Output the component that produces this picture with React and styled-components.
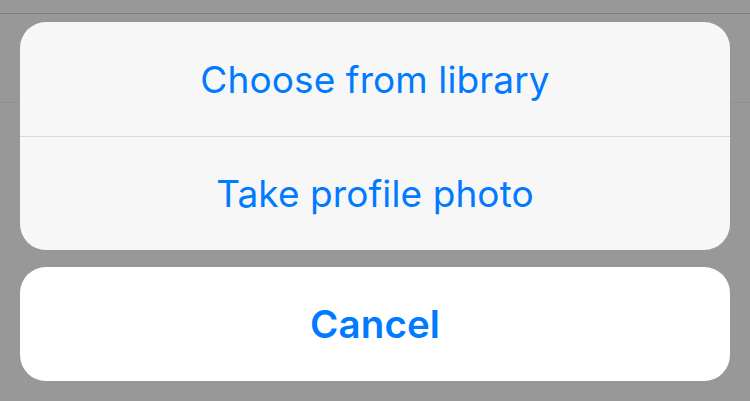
import React from "react";
import styled, { createGlobalStyle } from "styled-components";

const GlobalStyle = createGlobalStyle`
  html, body {
    margin: 0;
    padding: 0;
    background: #989898;
  }
  body {
    font-family: "Inter", "Liberation Sans", sans-serif;
    -webkit-font-smoothing: antialiased;
  }
`;

// dimmed page that sits behind the sheet
const Screen = styled.div`
  position: relative;
  width: 750px;
  height: 401px;
  overflow: hidden;
  background: #989898;
`;

const NavBar = styled.div`
  height: 13px;
  border-bottom: 1px solid #7e7e7e;
`;

const ListRow = styled.div`
  height: 88px;
  border-bottom: 1px solid #8b9196;
`;

// the action sheet overlays the page
const Sheet = styled.div`
  position: absolute;
  left: 0;
  right: 0;
  bottom: 0;
  padding: 0 20px 20px;
  display: flex;
  flex-direction: column;
  gap: 17px;
`;

const Group = styled.div`
  display: flex;
  flex-direction: column;
  border-radius: 26px;
  overflow: hidden;
  background: ${(props) => (props.cancel ? "#ffffff" : "#f7f7f7")};
`;

const Option = styled.button`
  height: 114px;
  border: none;
  margin: 0;
  padding: 0;
  background: transparent;
  color: #007aff;
  font-family: "Inter", "Liberation Sans", sans-serif;
  font-size: ${(props) => (props.bold ? "38.5px" : "37px")};
  font-weight: ${(props) => (props.bold ? 600 : 400)};
  letter-spacing: 0.1px;
  display: flex;
  align-items: center;
  justify-content: center;
  & + & {
    border-top: 1px solid #d8d8d8;
  }
`;

export default function App() {
  return (
    <>
      <GlobalStyle />
      <Screen>
        <NavBar />
        <ListRow />
        <Sheet>
          <Group>
            <Option>Choose from library</Option>
            <Option>Take profile photo</Option>
          </Group>
          <Group cancel>
            <Option bold>Cancel</Option>
          </Group>
        </Sheet>
      </Screen>
    </>
  );
}
